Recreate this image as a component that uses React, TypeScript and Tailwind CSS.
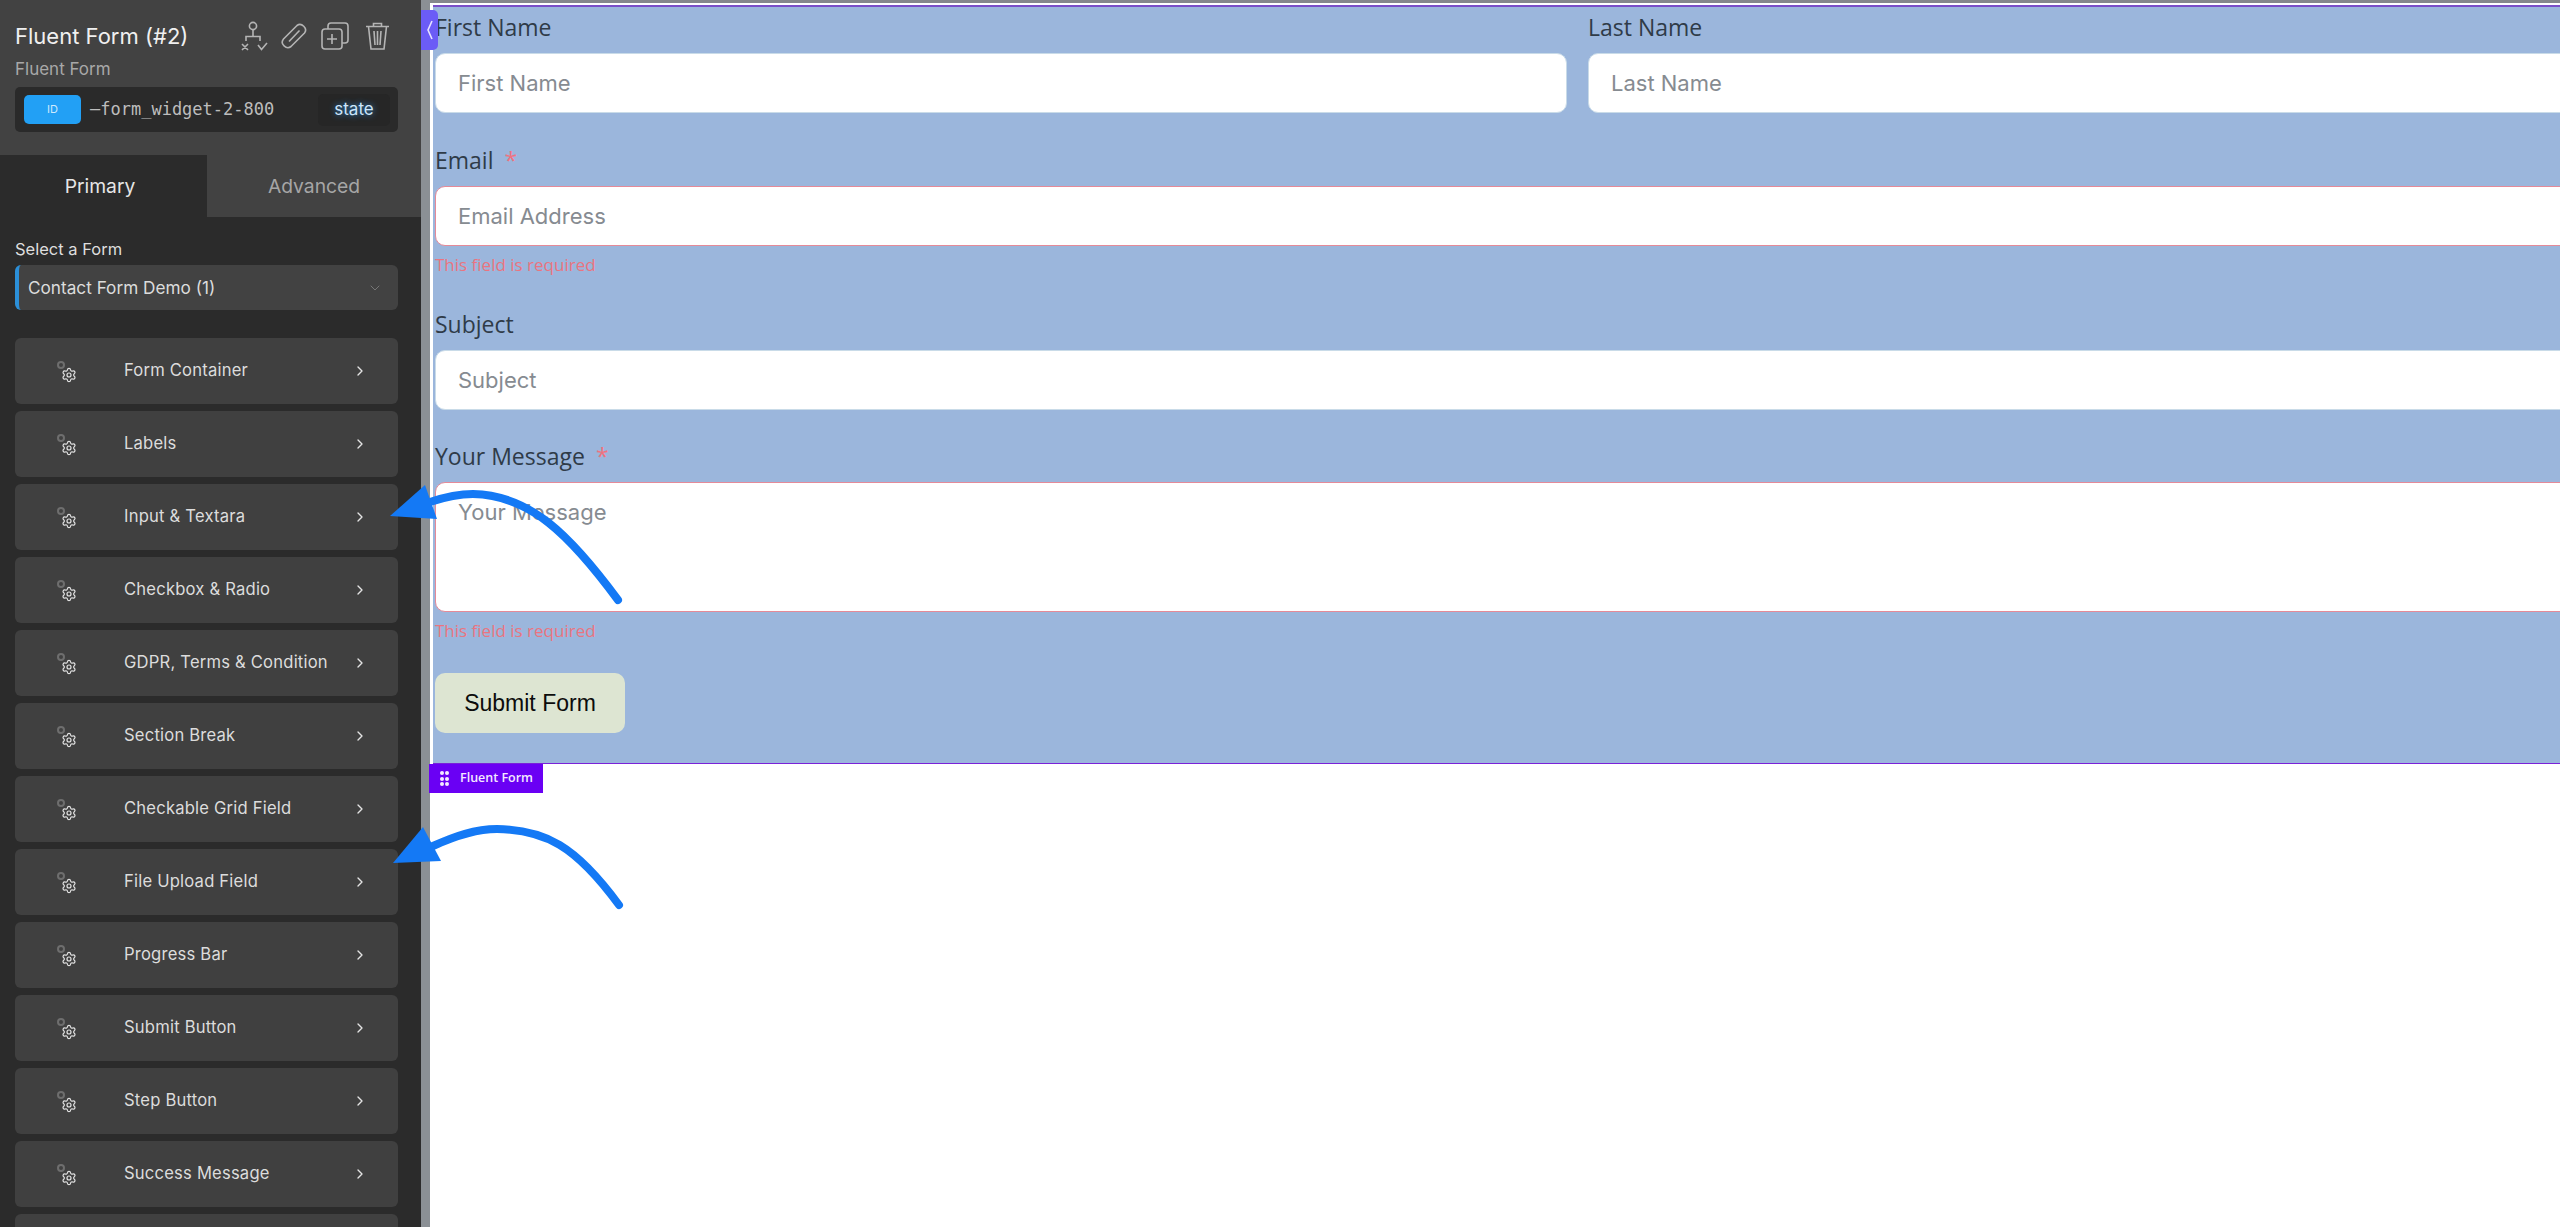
import { ChevronDown, ChevronRight, Settings } from "lucide-react";

const sections = [
  "Form Container",
  "Labels",
  "Input & Textara",
  "Checkbox & Radio",
  "GDPR, Terms & Condition",
  "Section Break",
  "Checkable Grid Field",
  "File Upload Field",
  "Progress Bar",
  "Submit Button",
  "Step Button",
  "Success Message",
  "",
];

const HeaderIcons = () => (
  <div className="flex items-center text-[#b4b4b4]">
    <svg width="28" height="30" viewBox="0 0 28 30" fill="none" stroke="currentColor" strokeWidth="1.6" className="mr-[12px]">
      <circle cx="13" cy="5" r="3.6" />
      <path d="M13 9v6M6 20v-4.500h14V20" />
      <path d="M2 23l6 6M8 23l-6 6M18 24l3.500 4.500L27 22" />
    </svg>
    <svg width="28" height="28" viewBox="0 0 28 28" fill="none" stroke="currentColor" strokeWidth="1.6" className="mr-[13px]">
      <path d="M17 3.500L3.500 17c-4 5 3 11 7.500 7.500L24.500 11c3.500-4.500-3-11-7.500-7.500z" />
      <path d="M9 19.500L19.500 8.500" />
    </svg>
    <svg width="28" height="28" viewBox="0 0 28 28" fill="none" stroke="currentColor" strokeWidth="1.6" className="mr-[16px]">
      <rect x="1" y="7" width="20" height="20" rx="3" />
      <path d="M7 7V4c0-2 1-3 3-3h14c2 0 3 1 3 3v14c0 2-1 3-3 3h-3M11 12v10M6 17h10" />
    </svg>
    <svg width="25" height="28" viewBox="0 0 25 28" fill="none" stroke="currentColor" strokeWidth="1.6">
      <path d="M1 4.500h23M8.500 4.500V1.500h8v3M3.500 4.500L6 27h13l2.500-22.500M9 9l1 14M12.500 9v14M16 9l-1 14" />
    </svg>
  </div>
);

const SectionRow = ({ label }: { label: string }) => (
  <div className="flex h-[66px] shrink-0 items-center rounded-[6px] bg-[#404040] text-[#dcdcdc]">
    <div className="relative h-full w-[109px] shrink-0">
      <span className="absolute left-[42px] top-[23px] h-[8px] w-[8px] rounded-full border-2 border-[#6e6e6e]" />
      <Settings size={16} strokeWidth={1.8} className="absolute left-[46px] top-[29px] text-[#e2e2e2]" />
    </div>
    <span className="mb-[2px] flex-1 text-[16.600px] tracking-[0.2px]">{label}</span>
    {label && <ChevronRight size={16} strokeWidth={2} className="mr-[30px] text-[#e4e4e4]" />}
  </div>
);

const Sidebar = () => (
  <aside className="flex h-full w-[421px] shrink-0 flex-col overflow-hidden bg-[#2b2b2b] font-['Inter',sans-serif]">
    <header className="h-[155px] shrink-0 bg-[#424242] pl-[15px] pr-[23px] pt-[21px]">
      <div className="flex h-[30px] items-center justify-between pr-[8px]">
        <h1 className="text-[22px] font-normal leading-none text-[#f0f0f0]">Fluent Form (#2)</h1>
        <HeaderIcons />
      </div>
      <p className="mt-[8px] text-[17px] leading-[20px] text-[#a8a8a8]">Fluent Form</p>
      <div className="mt-[8px] flex h-[45px] items-center rounded-[5px] bg-[#2a2a2a] pl-[9px] pr-[8px]">
        <span className="flex h-[29px] w-[57px] items-center justify-center rounded-[5px] bg-[#22a0f5] text-[11px] text-[#cfeafd]">
          ID
        </span>
        <span className="ml-[9px] flex-1 font-['DejaVu_Sans_Mono',monospace] text-[17px] text-[#bdbdbd]">
          –form_widget-2-800
        </span>
        <span className="flex h-[32px] w-[72px] items-center justify-center rounded-[5px] bg-[#262626] text-[17px] text-[#cde6fb] [text-shadow:0_0_6px_#2f8fe0]">
          state
        </span>
      </div>
    </header>
    <nav className="flex h-[62px] shrink-0 text-[19.300px]">
      <div className="flex w-[207px] items-center justify-center bg-[#2b2b2b] pr-[7px] text-[#e6e6e6]">Primary</div>
      <div className="flex flex-1 items-center justify-center bg-[#424242] text-[#a6a6a6]">Advanced</div>
    </nav>
    <div className="flex min-h-0 flex-1 flex-col pl-[15px] pr-[23px] pt-[22px]">
      <label className="text-[16.500px] leading-[20px] text-[#dedede]">Select a Form</label>
      <div className="mt-[6px] flex h-[45px] shrink-0 items-center justify-between rounded-[6px] border-l-[4px] border-[#2b8fd8] bg-[#424242] pl-[9px] pr-[15px] text-[17.200px] text-[#dcdcdc]">
        Contact Form Demo (1)
        <ChevronDown size={16} strokeWidth={1.5} className="text-[#777]" />
      </div>
      <div className="mt-[28px] flex flex-col gap-[7px]">
        {sections.map((label, i) => (
          <SectionRow key={i} label={label} />
        ))}
      </div>
    </div>
  </aside>
);

const Field = ({
  label,
  placeholder,
  required,
  error,
  className,
}: {
  label: string;
  placeholder: string;
  required?: boolean;
  error?: boolean;
  className?: string;
}) => (
  <div className={className}>
    <label className="block h-[26px] font-['Open_Sans',sans-serif] text-[23px] font-medium leading-[26px] text-[#2f3b48]">
      {label}
      {required && <span className="ml-[11px] text-[#ef7280]">*</span>}
    </label>
    <input
      placeholder={placeholder}
      className={`mt-[13px] block h-[60px] w-full rounded-[10px] border bg-white px-[22px] font-['Inter',sans-serif] text-[22px] outline-none placeholder:text-[#868b91] ${error ? "border-[#e58a98]" : "border-[#c9dbe8]"}`}
    />
  </div>
);

const ErrorText = () => (
  <p className="mt-[8px] h-[22px] font-['Open_Sans',sans-serif] text-[17px] leading-[22px] text-[#ea7480]">
    This field is required
  </p>
);

const FluentForm = () => (
  <div className="relative">
    <form className="h-[757px] overflow-hidden border-b border-[#7a22d8] bg-[#9bb6dc] pl-[2px] pt-[7px]">
      <div className="w-[calc(100%+20px)]">
        <div className="flex gap-[21px]">
          <Field label="First Name" placeholder="First Name" className="w-[1132px] shrink-0" />
          <Field label="Last Name" placeholder="Last Name" className="flex-1" />
        </div>
        <Field label="Email" placeholder="Email Address" required error className="mt-[34px]" />
        <ErrorText />
        <Field label="Subject" placeholder="Subject" className="mt-[35px]" />
        <div className="mt-[33px]">
          <label className="block h-[26px] font-['Open_Sans',sans-serif] text-[23px] font-medium leading-[26px] text-[#2f3b48]">
            Your Message
            <span className="ml-[11px] text-[#ef7280]">*</span>
          </label>
          <textarea
            placeholder="Your Message"
            className="mt-[13px] block h-[130px] w-full resize-none rounded-[10px] border border-[#e58a98] bg-white px-[22px] py-[13px] font-['Inter',sans-serif] text-[22px] outline-none placeholder:text-[#868b91]"
          />
        </div>
        <ErrorText />
        <button
          type="button"
          className="mt-[31px] h-[60px] w-[190px] rounded-[10px] bg-[#dde5d2] font-['Liberation_Sans',sans-serif] text-[23px] text-[#0c0c0c]"
        >
          Submit Form
        </button>
      </div>
    </form>
    <div className="absolute left-[-4px] top-[757px] flex h-[29px] w-[114px] items-center gap-[11px] bg-[#6a00f4] pl-[11px] font-['Open_Sans',sans-serif] text-[12.500px] font-semibold text-[#f4e9ff]">
      <span className="grid grid-cols-2 gap-x-[1px] gap-y-[1.500px]">
        {[0, 1, 2, 3, 4, 5].map((d) => (
          <span key={d} className="h-[4px] w-[4px] rounded-full bg-[#f4e9ff]" />
        ))}
      </span>
      Fluent Form
    </div>
  </div>
);

// annotation arrows drawn over the screenshot
const Arrows = () => (
  <svg className="pointer-events-none absolute left-0 top-0" width="700" height="1000" fill="none">
    <path d="M618 600C570 535 530 495 473 494C458 494 445 497 430 502" stroke="#1479f5" strokeWidth="8" strokeLinecap="round" />
    <path d="M425 485L390 516L437 519Z" fill="#1479f5" />
    <path d="M619 905C575 845 545 830 497 829C475 829 455 836 433 846" stroke="#1479f5" strokeWidth="8" strokeLinecap="round" />
    <path d="M423 827L393 863L441 861Z" fill="#1479f5" />
  </svg>
);

export default function App() {
  return (
    <div className="relative flex h-[1227px] w-full overflow-hidden bg-white">
      <Sidebar />
      <div className="w-[9px] shrink-0 bg-[#8b9095]" />
      <main className="min-w-0 flex-1 pl-[3px]">
        <div className="-ml-[3px] h-[3px] bg-[#85878c]" />
        <div className="mt-[2px] h-[2px] bg-[#7a4fc8]" />
        <FluentForm />
      </main>
      <button className="absolute left-[421px] top-[10px] flex h-[40px] w-[17px] items-center justify-center rounded-r-[5px] bg-[#6b5cf6] text-[#e6e2ff]">
        <svg width="7" height="20" viewBox="0 0 7 20" fill="none" stroke="currentColor" strokeWidth="1.6">
          <path d="M6 1L2 10l4 9" />
        </svg>
      </button>
      <Arrows />
    </div>
  );
}
